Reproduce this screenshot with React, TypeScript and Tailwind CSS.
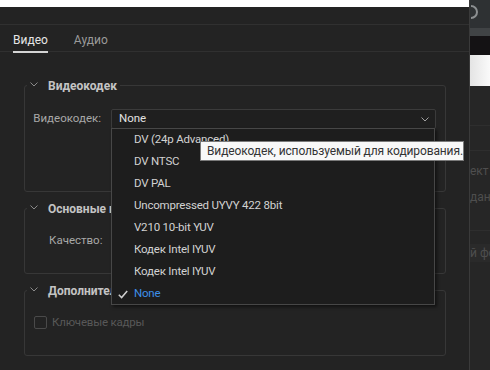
import type { ReactNode } from 'react';

const CODECS = [
  'DV (24p Advanced)',
  'DV NTSC',
  'DV PAL',
  'Uncompressed UYVY 422 8bit',
  'V210 10-bit YUV',
  'Кодек Intel IYUV',
  'Кодек Intel IYUV',
  'None',
];

const FONT = "font-['Roboto','Noto_Sans',sans-serif]";

function Chevron({ className = '' }: { className?: string }) {
  return (
    <svg width="8" height="5" viewBox="0 0 8 5" className={className}>
      <polyline points="0.5,0.5 4,4 7.5,0.5" fill="none" stroke="currentColor" strokeWidth="1" />
    </svg>
  );
}

function Section({
  title,
  className,
  children,
}: {
  title: string;
  className: string;
  children?: ReactNode;
}) {
  return (
    <fieldset className={`ml-[24px] mr-[23px] rounded-[3px] border border-[#373737] ${className}`}>
      <legend className="ml-[2px] h-[16px] px-[3px] pt-[1px] text-[12px] leading-[16px] font-bold text-[#c4c4c4]">
        <Chevron className="mr-[10px] inline-block align-[3px] text-[#8a8a8a]" />
        {title}
      </legend>
      {children}
    </fieldset>
  );
}

export default function App() {
  return (
    <div className={`flex h-[370px] w-[490px] overflow-hidden bg-[#232323] ${FONT}`}>
      {/* export dialog */}
      <div className="relative flex w-[469px] shrink-0 flex-col">
        <div className="h-[7px] bg-white" />
        <div className="h-[18px] border-b border-[#303030]" />
        <div className="flex h-[27px] items-start gap-[26px] border-b border-[#303030] pl-[13px] text-[12px]">
          <span className="mt-[7px] border-b-2 border-[#d4d4d4] pb-[3px] leading-[16px] text-[#e6e6e6]">Видео</span>
          <span className="mt-[7px] leading-[16px] text-[#9a9a9a]">Аудио</span>
        </div>

        <div className="h-[25px]" />
        <Section title="Видеокодек" className="h-[115px]">
          <div className="mt-[16px] flex items-center">
            <span className="w-[76px] text-right text-[11.5px] text-[#a8a8a8]">Видеокодек:</span>
            <div className="ml-[10px] flex h-[20px] w-[325px] items-center justify-between rounded-[2px] border border-[#3b3b3b] bg-[#1f1f1f] pl-[7px] pr-[6px] text-[11.5px] text-[#e2e2e2]">
              <span>None</span>
              <Chevron className="text-[#a0a0a0]" />
            </div>
          </div>
        </Section>

        <div className="h-[8px]" />
        <Section title="Основные настройки видео" className="h-[74px]">
          <div className="mt-[15px] flex h-[20px] items-center">
            <span className="ml-[24px] text-[11.5px] text-[#a8a8a8]">Качество:</span>
          </div>
        </Section>

        <div className="h-[8px]" />
        <Section title="Дополнительные настройки" className="h-[74px]">
          <label className="mt-[16px] ml-[9px] flex items-center gap-[5px] text-[11.5px] tracking-[-0.2px] text-[#585858]">
            <span className="h-[13px] w-[13px] rounded-[2px] border border-[#4a4a4a]" />
            Ключевые кадры
          </label>
        </Section>

        {/* open codec list */}
        <ul className="absolute left-[111px] top-[128px] h-[177px] w-[324px] border border-[#474747] bg-[#1d1d1d] shadow-[2px_2px_3px_rgba(0,0,0,0.5)]">
          {CODECS.map((c, i) => {
            const sel = i === CODECS.length - 1;
            return (
              <li key={i} className="flex h-[22px] items-center text-[11.5px] tracking-[-0.2px]">
                <span className="flex w-[22px] justify-end pr-[6px]">
                  {sel && (
                    <svg width="10" height="9" viewBox="0 0 10 9">
                      <polyline points="0.8,4.8 3.6,7.6 9.2,1" fill="none" stroke="#cfcfcf" strokeWidth="1.5" />
                    </svg>
                  )}
                </span>
                <span className={sel ? 'text-[#3d8fe8]' : 'text-[#d2d2d2]'}>{c}</span>
              </li>
            );
          })}
        </ul>

        <div className="absolute left-[200px] top-[141px] flex h-[20px] w-[264px] items-center whitespace-nowrap border border-[#7a7a7a] bg-[#f8f8f8] pl-[6px] text-[12px] tracking-[-0.12px] text-[#333]">
          Видеокодек, используемый для кодирования.
        </div>
      </div>

      {/* window behind */}
      <div className="flex flex-1 flex-col overflow-hidden border-l border-[#3a3a3a] bg-[#262626] text-[12px] text-[#4e4e4e]">
        <div className="h-[28px] bg-[#2e3133] pl-[1px] pt-[4px]">
          <svg width="10" height="16" viewBox="0 0 10 16">
            <path d="M0 2 A6 6 0 0 1 6 8 A6 6 0 0 1 0 14" fill="none" stroke="#8c8f91" strokeWidth="2" />
          </svg>
        </div>
        <div className="h-[8px] bg-[#404345]" />
        <div className="h-[19px] bg-[#141214]" />
        <div className="h-[31px] bg-gradient-to-r from-[#e4e4e4] to-[#fafafa]" />
        <div className="mt-[39px] border-t border-[#2e2e2e]" />
        <div className="mt-[24px] border-t border-[#2e2e2e]" />
        <div className="mt-[11px] whitespace-nowrap">ект</div>
        <div className="mt-[8px] whitespace-nowrap">дан</div>
        <div className="mt-[24px] border-t border-[#2e2e2e]" />
        <div className="mt-[13px] whitespace-nowrap bg-[#2a2a2a]">й фо</div>
      </div>
    </div>
  );
}
